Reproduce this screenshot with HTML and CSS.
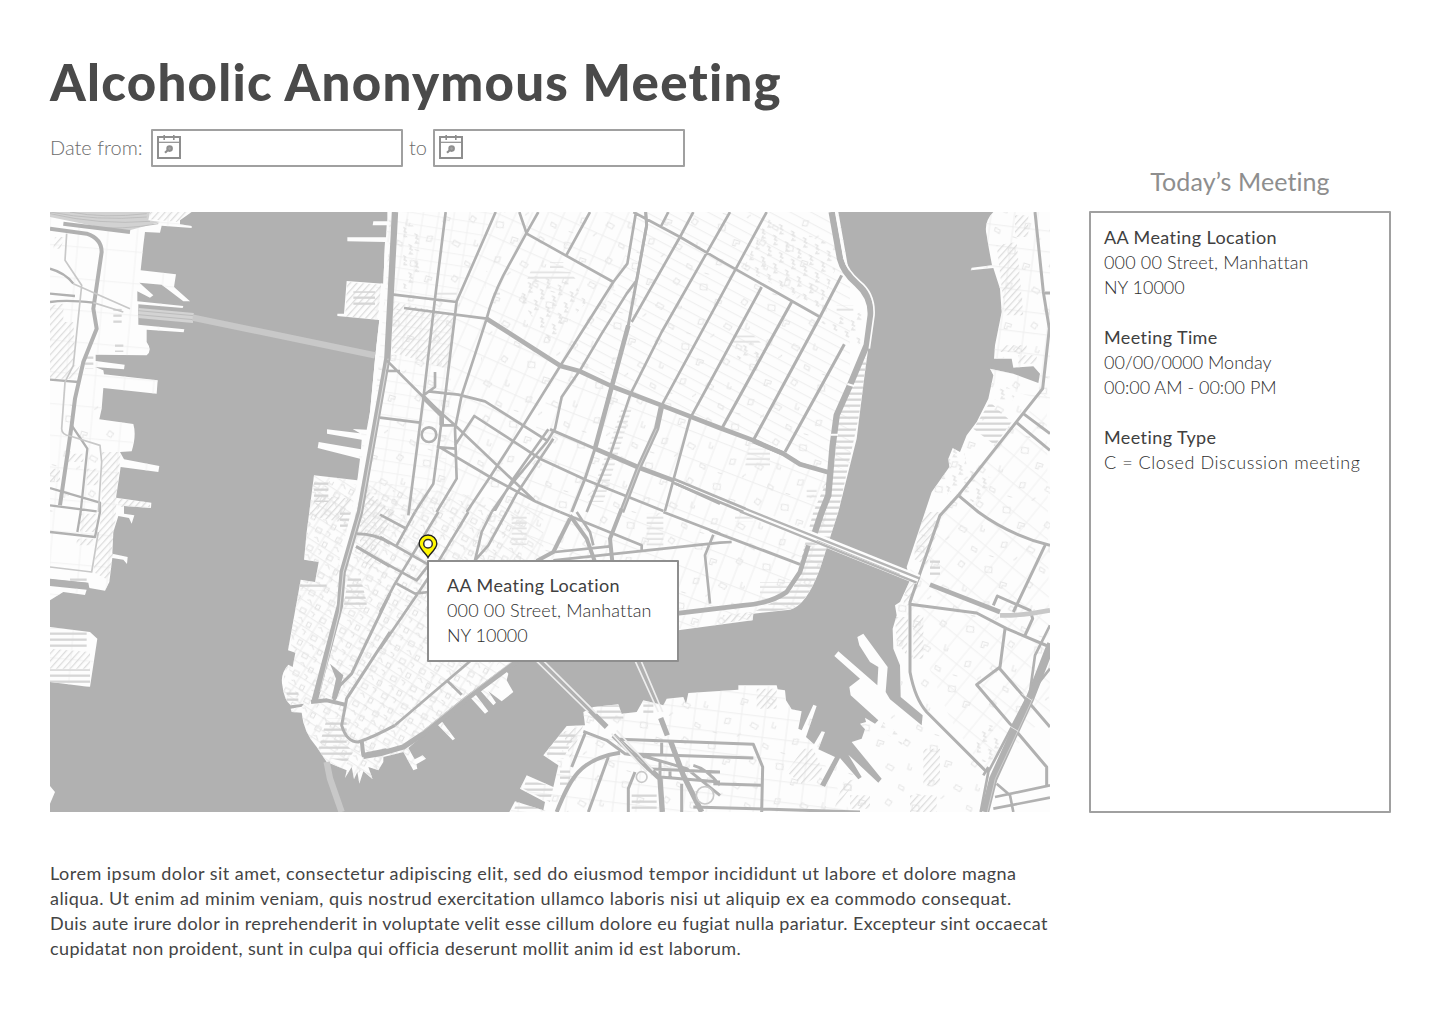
FILE: index.html
```html
<!DOCTYPE html>
<html lang="en">
<head>
<meta charset="utf-8">
<title>Alcoholic Anonymous Meeting</title>
<link rel="stylesheet" href="styles.css">
</head>
<body>
<svg class="defs" aria-hidden="true">
  <symbol id="calendar" viewBox="0 0 26 26">
    <rect x="2" y="3" width="22" height="21" fill="none" stroke="#8e8e8e" stroke-width="2"/>
    <path d="M2 8.3H24" stroke="#8e8e8e" stroke-width="1.2"/>
    <path d="M8.2 1V6M17.800 1V6" stroke="#8e8e8e" stroke-width="1.6"/>
    <circle cx="13.600" cy="14.600" r="2.300" fill="#a5a5a5" stroke="#8e8e8e" stroke-width="2"/>
    <path d="M12 16L9 18.800" stroke="#8e8e8e" stroke-width="2.200"/>
  </symbol>
</svg>
<div class="page">
  <header class="header">
    <h1 class="title">Alcoholic Anonymous Meeting</h1>
    <div class="filter">
      <span class="filter-label from">Date from:</span>
      <div class="date-input"><svg class="calendar"><use href="#calendar"/></svg></div>
      <span class="filter-label to">to</span>
      <div class="date-input"><svg class="calendar"><use href="#calendar"/></svg></div>
    </div>
  </header>
  <div class="content">
    <main class="main">
      <div class="map">
        <svg class="map-art" viewBox="0 0 3000 1800" aria-hidden="true">
          <defs>
            <pattern id="diag" width="15" height="15" patternUnits="userSpaceOnUse" patternTransform="rotate(42)"><path d="M2 0V15" stroke="#dadada" stroke-width="3.500"/></pattern>
            <pattern id="stripe" width="20" height="18" patternUnits="userSpaceOnUse"><path d="M0 5H20" stroke="#d6d6d6" stroke-width="7"/></pattern>
            <pattern id="stripe-light" width="20" height="16" patternUnits="userSpaceOnUse"><path d="M0 5H20" stroke="#e4e4e4" stroke-width="6"/></pattern>
            <pattern id="blocks-nj" width="88" height="95" patternUnits="userSpaceOnUse" patternTransform="rotate(5)"><path d="M0 2H88M3 0V95" stroke="#f2f2f2" stroke-width="3"/></pattern>
            <pattern id="blocks-west" width="46" height="34" patternUnits="userSpaceOnUse" patternTransform="rotate(9)"><path d="M0 2H46M3 0V34" stroke="#f1f1f1" stroke-width="3"/></pattern>
            <pattern id="blocks-soho" width="44" height="68" patternUnits="userSpaceOnUse" patternTransform="rotate(24)"><path d="M0 2H44M3 0V68" stroke="#eeeeee" stroke-width="3"/></pattern>
            <pattern id="blocks-east" width="96" height="29" patternUnits="userSpaceOnUse" patternTransform="rotate(28)"><path d="M0 2H96" stroke="#ededed" stroke-width="3"/></pattern>
            <pattern id="blocks-les" width="48" height="78" patternUnits="userSpaceOnUse" patternTransform="rotate(21)"><path d="M0 2H48M3 0V78" stroke="#eeeeee" stroke-width="3"/></pattern>
            <pattern id="blocks-fidi" width="42" height="33" patternUnits="userSpaceOnUse" patternTransform="rotate(33)"><path d="M0 2H42M3 0V33" stroke="#ebebeb" stroke-width="3"/></pattern>
            <pattern id="blocks-bk" width="52" height="66" patternUnits="userSpaceOnUse" patternTransform="rotate(39)"><path d="M0 2H52M3 0V66" stroke="#f0f0f0" stroke-width="3"/></pattern>
            <pattern id="blocks-navy" width="70" height="62" patternUnits="userSpaceOnUse" patternTransform="rotate(7)"><path d="M0 2H70M3 0V62" stroke="#eeeeee" stroke-width="3"/></pattern>
            <pattern id="buildings" width="213" height="187" patternUnits="userSpaceOnUse" patternTransform="rotate(17)"><path d="M12 10l20 -4l4 16l-20 4zM70 40h18v8h-10v10h-8zM150 14l14 5l-5 14l-14 -5zM40 112l14 -4v16l-14 3zM120 100l20 5l-4 12l-20 -5zM180 80v18h10v-9M14 162h14M88 154l8 -12M170 150l16 4v10l-16 -4z" fill="none" stroke="#e6e6e6" stroke-width="3"/></pattern>
            <pattern id="lots" width="67" height="59" patternUnits="userSpaceOnUse" patternTransform="rotate(27)"><path d="M5 6h16v14h-16zM36 4l13 3l-3 12M10 38l8 -4l10 10M42 36h12v14h-12z" fill="none" stroke="#e3e3e3" stroke-width="3"/></pattern>
            <pattern id="project" width="41" height="37" patternUnits="userSpaceOnUse" patternTransform="rotate(29)"><path d="M4 8h10v9h10M30 26l-10 5v-8" fill="none" stroke="#e4e4e4" stroke-width="4"/></pattern>
            <clipPath id="manhattan"><path id="manhattan-shore" d="M1012 0V28H970L968 40H1010L1008 76H892V88L1005 90L1000 215L890 207L882 305H862V312L988 324L975 440L960 600L950 653L908 651L930 664L831 652V665L935 683L933 712L806 690L803 708L930 740L922 805L792 790L770 960L762 1043L806 1050L795 1110L752 1103L714 1315L736 1322L728 1365L715 1358Q690 1385 697 1420Q702 1465 722 1480L762 1475L755 1484L722 1490L725 1500L755 1502Q760 1560 800 1605L830 1650L890 1675L885 1698L905 1665L912 1702L922 1680L928 1715L940 1678L968 1702L955 1665L985 1675L1000 1650L1000 1635L1060 1620L1090 1675L1102 1670L1099 1657L1128 1640L1118 1630L1094 1642L1075 1608L1160 1535L1208 1585L1215 1580L1174 1526L1260 1455L1305 1505L1315 1498L1275 1445L1290 1435L1330 1480L1338 1472L1315 1438L1355 1468L1390 1440L1370 1405L1375 1385L1362 1370L1400 1348L1885 1255L2108 1225L2110 1205L2220 1193Q2270 1180 2310 1070L2365 900L2420 680L2445 480L2470 300Q2475 260 2445 235Q2405 205 2395 170L2365 0Z"/></clipPath>
            <clipPath id="brooklyn"><path id="brooklyn-shore" d="M2830 0Q2800 30 2810 70L2817 112L2826 160L2765 167L2762 175L2830 168L2850 230L2855 300L2835 400L2832 440H2885L2890 467L2950 463L2970 485L2965 513L2890 485L2820 470L2830 490L2815 560L2780 630L2750 670L2730 720L2708 708L2695 740L2698 765L2645 840L2625 900L2570 1065L2580 1105L2550 1170L2535 1180L2540 1210L2528 1250L2530 1310L2550 1360L2552 1455L2618 1510L2615 1540L2520 1462L2507 1440L2513 1365L2440 1265L2422 1275L2428 1300L2460 1350L2485 1365L2482 1420L2365 1318L2353 1332L2430 1400L2398 1425L2402 1450L2485 1525L2475 1535L2445 1517L2448 1530L2430 1535L2445 1552L2435 1580L2405 1590L2495 1700L2485 1712L2395 1628L2435 1695L2425 1702L2370 1638L2325 1725L2310 1718L2355 1635L2305 1612L2325 1560L2315 1558L2292 1597L2268 1575L2300 1482L2290 1478L2255 1555L2245 1550L2255 1498L2225 1492L2208 1465L2205 1435L2183 1432L2180 1420L2065 1420V1433L1915 1443L1908 1475L1900 1455L1850 1460L1840 1480L1780 1465L1760 1500L1715 1505L1705 1477L1630 1485L1600 1500L1605 1540L1550 1542L1480 1630L1525 1660L1510 1725L1430 1690L1410 1730L1485 1770L1480 1795L1395 1768L1378 1800H3000V0Z"/></clipPath>
            <clipPath id="jersey"><path id="jersey-shore" d="M0 0H425L390 25V37L425 42V48L335 41L330 62L285 60L280 100L272 175L378 187L372 225L420 268H400L335 218L268 212L310 250L300 257L262 238V268L400 282L398 288L265 277V338L403 352L401 361L290 353V390Q308 415 290 430L137 428V447L224 458L222 472L135 465L160 475L162 487L323 505L320 545L160 528L155 590L148 622L250 636Q260 670 245 718L210 720L222 742L328 762L325 780L212 765L198 857L304 872L303 888L222 882V905L253 910L245 935L237 918L205 912L190 960L187 1025L233 1035L231 1056L220 1043L187 1038L178 1110L165 1136L118 1128L115 1112L0 1100ZM0 1122L110 1133L105 1149L40 1140L0 1165ZM0 1245L120 1260L142 1280L120 1425L0 1410ZM0 1722L15 1740L0 1775Z"/></clipPath>
          </defs>

          <rect width="3000" height="1800" fill="#b1b1b1"/>
          <g fill="#fdfdfd"><use href="#manhattan-shore"/><use href="#brooklyn-shore"/><use href="#jersey-shore"/></g>

          <!-- minor streets and building footprints -->
          <g clip-path="url(#jersey)">
            <rect width="450" height="1440" fill="url(#blocks-nj)"/>
            <path d="M40 560H240V720H40ZM0 640H150V900H0Z" fill="url(#buildings)"/>
            <path d="M0 280L40 275V330H70L75 420L60 500H0ZM15 75H45L30 110H10ZM60 460H90L75 500H50ZM300 0H425L380 30L300 22ZM155 720H212L200 860L185 1110L130 1080L155 900ZM50 725H100V750H50ZM110 770H145V820H110ZM0 770H30V810H0ZM205 862H300V885H205ZM90 905H140V960H90ZM80 980H130V1000H80ZM0 1310L120 1320V1370H0Z" fill="url(#diag)"/>
            <path d="M0 1250H110V1310H0ZM0 1372H120V1425H0ZM190 290H215V340H190ZM195 390H220V420H195ZM105 430H130V470H105ZM60 1090H110V1110H60Z" fill="url(#stripe)"/>
            <path d="M0 0H300L295 25L330 30L220 60L0 15Z" fill="#d2d2d2"/>
            <path d="M0 5Q150 40 300 28M0 0Q140 28 290 15M60 0Q160 20 290 5M100 45Q220 55 325 35" fill="none" stroke="#bebebe" stroke-width="3"/>
          </g>
          <g clip-path="url(#manhattan)">
            <path d="M1000 0H1330L1215 300L1180 900L900 1000Z" fill="url(#blocks-west)"/>
            <path d="M1330 0H1760L1700 230L1540 460L1270 900H1150L1215 300Z" fill="url(#blocks-soho)"/>
            <path d="M1760 0H2400V780L1530 460L1700 230Z" fill="url(#blocks-east)"/>
            <path d="M1530 460L2340 780L2300 1250H1500L1380 850Z" fill="url(#blocks-les)"/>
            <path d="M760 780L1480 880L1480 1300L1000 1760H690Z" fill="url(#blocks-fidi)"/>
            <path d="M1020 0H1340L1230 320L1190 900L940 900ZM1320 0H2330V760L1290 500Z" fill="url(#buildings)"/>
            <path d="M1290 500L2340 760L2300 1250H1250Z" fill="url(#buildings)"/>
            <path d="M770 800L940 820L1440 900L1350 1350L1000 1740L690 1500Z" fill="url(#lots)"/>
            <path d="M1440 190L1570 210L1610 270L1500 390L1400 250ZM2150 20L2380 110L2310 290L2080 170ZM2060 390H2130V450L2050 440ZM2310 330L2440 300L2430 400ZM1060 40H1110V230H1060Z" fill="url(#project)"/>
            <path d="M1030 270L1220 310L1190 470L1025 420ZM892 210L995 218L988 322H885ZM800 850L905 860L870 930L775 910ZM930 820L1030 900L960 1080L930 1010ZM2020 1210L2105 1200V1220L2010 1235Z" fill="url(#diag)"/>
            <path d="M910 238H975V285H910ZM792 805H835V870H792ZM870 900H905V950H870ZM895 1090H930L950 1170V1190H880ZM750 1110H830V1135H750ZM830 1520H890V1600L910 1620L890 1650L800 1630ZM710 1440H745V1475H710ZM2440 440H2455L2425 620L2365 900L2310 1070Q2270 1180 2220 1190L2090 1210L2170 1170L2230 1130L2290 900L2355 750L2360 620L2405 510Z" fill="url(#stripe)"/>
            <path d="M1445 170L1560 180L1580 205H1430ZM1500 150H1540V170H1500ZM1715 590H1745L1660 870H1615L1670 720ZM1385 910H1430V1000H1385ZM1790 905H1840V1015H1790ZM2050 370H2110L2140 400H2050ZM2095 710H2160V765H2085ZM2360 280H2410V300H2360ZM2130 1110H2220V1150H2130ZM2055 905H2110V930H2055ZM2270 830H2300V865H2270ZM1160 240H1220V250H1160ZM1330 240H1350V250H1330Z" fill="url(#stripe-light)"/>
            <path d="M1010 90L1000 220L962 640L915 880L872 1060" fill="none" stroke="#fdfdfd" stroke-width="14"/>
          </g>
          <g clip-path="url(#brooklyn)">
            <path d="M2790 0H3000V560L2960 560L2780 500Z" fill="url(#blocks-navy)"/>
            <path d="M2990 540L2600 980L2560 1180L2700 1520L2810 1690L3000 1500Z" fill="url(#blocks-bk)"/>
            <path d="M1500 1420H2200L2400 1800H1380Z" fill="url(#blocks-navy)"/>
            <path d="M2800 0H3000V1500L2540 1500V1130Z" fill="url(#buildings)"/>
            <path d="M1600 1480L2240 1440L2450 1800H1450Z" fill="url(#buildings)"/>
            <path d="M2400 1480L2640 1500L2820 1690V1800H2350Z" fill="url(#buildings)"/>
            <path d="M2840 100L2900 90L2920 310H2865ZM2860 400H2930V420H2850ZM2895 10H2935V75H2895ZM2905 430H2960V455H2905ZM2620 900H2680L2630 1060L2590 1040ZM2570 1110H2610L2580 1180H2560ZM2535 1215H2575L2570 1330L2540 1290ZM2590 1210H2620V1340H2590ZM2120 1430H2180V1490H2120ZM2260 1610L2290 1610L2320 1680L2260 1720L2210 1680ZM2400 1750H2460V1790H2400ZM2620 1610H2670V1720H2620ZM2580 1750H2660V1800H2580ZM2380 1710L2420 1700L2350 1800ZM1540 1560L1600 1540L1560 1640Z" fill="url(#diag)"/>
            <path d="M2650 740L2740 700L2750 760L2690 850ZM2840 510L2900 540L2880 580L2830 560ZM2740 760L2830 800L2790 880L2700 840ZM2780 1540H2850V1650H2780ZM2500 1530L2580 1590L2570 1610L2490 1550Z" fill="url(#project)"/>
            <path d="M2820 570L2885 630L2835 700L2770 650ZM2640 1040H2670V1090H2640ZM1510 1560H1580L1540 1640L1490 1630ZM1430 1700L1510 1725L1500 1770L1420 1730ZM1400 1770H1480V1800H1390ZM1640 1480H1720V1520H1640ZM1745 1740H1820V1800H1745ZM1780 1470H1810V1510H1780ZM1530 1670H1560V1720H1530Z" fill="url(#stripe)"/>
          </g>

          <path d="M0 1102L110 1112L118 1128L0 1120ZM840 1355L880 1390L860 1460H845L858 1400Z" fill="#b1b1b1"/>

          <!-- tunnels -->
          <path d="M265 303L430 318" stroke="#d3d3d3" stroke-width="30"/>
          <path d="M265 296L430 311M265 308L430 323" stroke="#bdbdbd" stroke-width="3"/>
          <path d="M428 317L975 430M830 1650L840 1700L875 1800" fill="none" stroke="#c8c8c8" stroke-width="19"/>

          <g class="roads">
            <!-- Jersey City -->
            <path class="w12" d="M0 50L110 65Q155 80 155 120L130 290L140 350L100 450L75 560L65 640L30 880"/>
            <path class="w12" d="M40 35L240 60"/>
            <path class="w7" d="M65 640L112 710L92 900L82 960M0 170Q45 182 70 215M0 245L75 252M0 270Q50 262 130 272M0 503L85 510M0 828L150 872V900L135 975L0 960M0 880L140 898"/>
            <path class="w5 light" d="M50 65L45 145L95 220L70 460L45 510L35 650Q35 668 60 672L150 700L155 750L145 900M70 215L240 290M130 272L220 300M0 1065L125 1080L145 960"/>
            <!-- West Street -->
            <path class="w20" d="M1035 0L1012 440L930 900L878 1080L870 1180L793 1470"/>
            <path class="lane" d="M1014 440L932 900L880 1080L868 1200L810 1440"/>
            <path class="w12" d="M783 1470L830 1465L885 1478M940 1630L935 1585M935 1630L1010 1615"/>
            <path class="w9" d="M920 965Q980 965 1020 995M918 1003L1020 1063M1020 1145L945 1300L905 1385L870 1420L850 1470M1020 1260L890 1460L875 1540Q890 1590 925 1590Q970 1575 1035 1540"/>
            <!-- SoHo, Village, East Side -->
            <g transform="translate(990)">
              <path class="w8" d="M197 0L165 260L130 560L85 910M347 0L230 268L197 540L182 650L160 815L105 900M475 0L440 62L370 190Q335 260 320 320L245 550L225 650L230 800L170 900M418 0L440 65L700 210M630 0L560 128M768 0L742 155L700 210L542 460L430 640L330 795L260 900M797 0L800 40L770 205L740 245L665 365L600 475L545 555L525 650L500 690L385 828L335 900M940 0L900 75L755 330M1050 0L845 360L752 545L690 730L620 900M1160 0L845 580M1145 225L990 510L930 620L855 897M760 0L900 75L1020 145L1320 315M865 0L842 45M35 247L230 270M72 288L320 320M18 477H60M20 445L130 555L225 640L465 868M145 538L235 548L315 568L500 685M225 700L283 612L480 740L620 805L850 897M180 706L330 795L465 868L540 900M0 617L120 632M505 652L400 800L345 895M520 680L410 845L380 900M888 815L1020 875M165 480V525L130 550M180 640H225M170 705L225 710"/>
              <circle class="w8" cx="147" cy="668" r="22"/>
              <path class="w9" d="M797 0L800 40L770 205L745 340L695 520L645 710L615 800L575 900M320 320L542 462M510 652L645 710"/>
              <path class="w13" d="M320 320L542 462L600 478L700 525L845 580L1020 648L1120 685L1210 725M130 555L185 610V640M745 340L645 710L780 768L880 805"/>
              <path class="w8" d="M880 800L1120 900M880 812L1090 900"/>
              <path class="w17" d="M845 580L830 650L775 770L725 900"/>
              <path class="lane thin" d="M830 650L775 770L725 900"/>
            </g>
            <!-- Alphabet City and FDR Drive -->
            <g transform="translate(1980)">
              <path class="w9" d="M395 190L330 315L130 685M245 270L35 650M403 397L225 720M125 685L220 725L270 755L350 780"/>
              <path class="w13" d="M130 687L220 725L270 757L360 782"/>
              <path class="w20" d="M365 0L390 140Q400 180 440 215Q485 255 482 310L470 400L420 520L380 610L368 700L355 850L335 900L310 975"/>
              <path class="shore-lane" d="M378 0L403 140Q412 175 450 208Q496 245 492 310L478 410"/>
              <path class="gap" d="M412 516L432 522M362 668L384 668"/>
              <path class="w13" d="M295 1000L270 1080L230 1140Q180 1175 100 1180L-105 1205"/>
              <path class="w9" d="M975 0L1000 240L1018 350L998 530L745 850Q700 900 690 910L600 1170V1380Q615 1460 650 1500L830 1680"/>
              <path class="w9" d="M745 850L805 900Q900 970 1020 1000M940 605L1020 665M920 632L1020 715M1005 243H1020M0 955L270 1057M600 1177L800 1203L890 1250L1020 1305M885 1250L870 1365L800 1418L1010 1665V1720M865 1365L1020 1545M1005 1000L910 1200M850 1180L862 1152L960 1195L968 1220L945 1270"/>
            </g>
            <!-- Lower Manhattan -->
            <g transform="translate(990 900)">
              <path class="w8" d="M105 0L50 100M175 0L45 215L0 300M265 0L150 190L110 250L0 410M0 75L145 158M0 145L110 205L145 160M50 215L105 245L145 240M335 0L305 60L285 145M380 0L325 100L285 145M540 0L785 100V120M590 0L630 60L640 100M520 145L1020 92L1055 90M525 120L690 103M850 0L1020 65M1000 68L975 130L990 275M270 448L45 640M200 505L245 548M0 8L75 48"/>
              <path class="w12" d="M570 20L520 120L470 147M570 10L620 80L645 150M725 -10L690 80L697 150"/>
              <path class="w16" d="M410 448L260 560L130 665L70 705L0 725L-50 733"/>
              <path class="lane thin" d="M400 446L250 560L125 660"/>
            </g>
            <!-- Downtown Brooklyn -->
            <g transform="translate(990 900)">
              <path class="w16" d="M625 590L680 645M700 670L840 800L847 900"/>
              <path class="lane thin" d="M705 668L790 755"/>
              <path class="w16" d="M842 618L862 670M872 688L910 790L965 900"/>
              <path class="w9" d="M610 658L680 685L735 725L800 735L920 770L1020 850M735 725L1120 738M615 665L575 765M685 735L625 900M765 780L745 830V900M845 685V725M840 750V795L1020 810M905 815V900M800 770L1020 780M720 682L1120 697L1148 765L1145 900M1000 815L1145 820M940 760Q980 770 1020 820M870 775V800M940 885L1440 900"/>
              <path class="w12" d="M530 900C570 800 600 740 720 722"/>
              <circle class="w5 light" cx="785" cy="795" r="16"/><circle class="w5 light" cx="975" cy="850" r="26"/>
            </g>
            <!-- Williamsburg and Navy Yard -->
            <g transform="translate(1980 900)">
              <path class="w14" d="M660 218L870 300"/>
              <path class="w14 light" d="M870 310Q930 312 1020 295"/>
              <path class="w24" d="M1024 395L960 560L900 690L850 800L825 900"/>
              <path class="w8" d="M1020 340L975 430L960 540L835 780L812 900M1020 470L980 520M855 855L1020 820M850 890L1020 857M860 815L900 850L910 900M835 765L820 790"/>
              <path class="lane thin" d="M968 560L908 690L856 800L832 900"/>
              <path class="gap thin" d="M935 545L965 565M895 640L925 658"/>
            </g>
          </g>

          <!-- bridges -->
          <path d="M2085 893L2605 1103" stroke="#fdfdfd" stroke-width="30"/>
          <path d="M2070 898L2600 1112M2085 890L2610 1100" stroke="#b5b5b5" stroke-width="7"/>
          <path d="M2300 985L2550 1087" stroke="#c6c6c6" stroke-width="3"/>
          <path d="M1458 1346L1615 1500M1480 1346L1640 1505M1755 1346L1825 1500M1773 1346L1838 1500M1685 1565L1790 1680M1700 1555L1810 1675" stroke="#eeeeee" stroke-width="5"/>
        </svg>
        <svg class="pin" viewBox="0 0 20 25" aria-label="Meeting location">
          <path d="M10 23.500C8.500 20 1.200 15 1.200 9.800A8.800 8.800 0 0 1 18.800 9.800C18.800 15 11.500 20 10 23.500Z" fill="#fff700" stroke="#222" stroke-width="1.400"/>
          <circle cx="10" cy="9.700" r="4.300" fill="#fff" stroke="#333" stroke-width="1.500"/>
        </svg>
        <div class="popup">
          <p class="strong s1">AA Meating Location</p>
          <p class="s2">000 00 Street, Manhattan</p>
          <p>NY 10000</p>
        </div>
      </div>
      <div class="description">
        <p class="d1">Lorem ipsum dolor sit amet, consectetur adipiscing elit, sed do eiusmod tempor incididunt ut labore et dolore magna</p>
        <p class="d2">aliqua. Ut enim ad minim veniam, quis nostrud exercitation ullamco laboris nisi ut aliquip ex ea commodo consequat.</p>
        <p class="d3">Duis aute irure dolor in reprehenderit in voluptate velit esse cillum dolore eu fugiat nulla pariatur. Excepteur sint occaecat</p>
        <p class="d4">cupidatat non proident, sunt in culpa qui officia deserunt mollit anim id est laborum.</p>
      </div>
    </main>
    <aside class="sidebar">
      <h2 class="sidebar-title">Today’s Meeting</h2>
      <div class="panel">
        <section>
          <p class="strong s1">AA Meating Location</p>
          <p class="s2">000 00 Street, Manhattan</p>
          <p>NY 10000</p>
        </section>
        <section>
          <p class="strong s1">Meeting Time</p>
          <p>00/00/0000 Monday</p>
          <p>00:00 AM - 00:00 PM</p>
        </section>
        <section>
          <p class="strong s1">Meeting Type</p>
          <p class="s3">C = Closed Discussion meeting</p>
        </section>
      </div>
    </aside>
  </div>
</div>
</body>
</html>
```
FILE: styles.css
```css
* { box-sizing: border-box; }
body { margin: 0; background: #fff; color: #2e2e2e; font-family: Lato, sans-serif; font-size: 18px; line-height: 25px; font-weight: 300; }
h1, h2, p { margin: 0; white-space: nowrap; }
.defs { display: block; width: 0; height: 0; }
.page { width: 1440px; height: 1024px; padding: 50px 49px 0 50px; }

.title { height: 79px; font-size: 51px; line-height: 64px; font-weight: 900; letter-spacing: 1.25px; color: #4a4a4a; }
.filter { display: flex; height: 38px; align-items: center; }
.filter-label { height: 38px; font-size: 20px; color: #6c6c6c; line-height: 36px; }
.from { width: 101px; }
.to { width: 30px; padding-left: 6px; }
.date-input { width: 252px; height: 38px; border: 2px solid #a0a0a0; border-radius: 1px; padding: 3px; }
.calendar { display: block; width: 26px; height: 26px; }

.content { display: flex; gap: 39px; }
.main { width: 1000px; padding-top: 45px; }
.map { position: relative; height: 600px; overflow: hidden; }
.map-art { display: block; width: 1000px; height: 600px; }
.pin { position: absolute; left: 368px; top: 322px; width: 20px; height: 25px; }
.popup { position: absolute; left: 377px; top: 348px; width: 252px; height: 102px; padding: 11px 18px; background: #fff; border: 2px solid #8e8e8e; border-radius: 1px; }

.description { padding-top: 49px; font-weight: 400; color: #444; }
.d1 { letter-spacing: .48px; }
.d2 { letter-spacing: .445px; }
.d3 { letter-spacing: .37px; }
.d4 { letter-spacing: .385px; }

.sidebar { width: 302px; }
.sidebar-title { height: 44px; line-height: 28px; font-size: 25px; font-weight: 400; letter-spacing: .1px; color: #8e8e8e; text-align: center; }
.panel { display: flex; flex-direction: column; gap: 25px; height: 602px; padding: 12px 13px; border: 2px solid #a0a0a0; border-radius: 1px; }
.strong { font-weight: 400; color: #404040; }
.s1 { letter-spacing: .41px; }
.s2 { letter-spacing: .15px; }
.s3 { letter-spacing: .55px; }

.roads path, .roads circle { fill: none; stroke: #b1b1b1; stroke-linejoin: round; }
.roads .light { stroke: #c8c8c8; }
.roads .w5 { stroke-width: 5; }
.roads .w7 { stroke-width: 7; }
.roads .w8 { stroke-width: 8; }
.roads .w9 { stroke-width: 9; }
.roads .w12 { stroke-width: 12; }
.roads .w13 { stroke-width: 14; }
.roads .w14 { stroke-width: 14; }
.roads .w16 { stroke-width: 16; }
.roads .w17 { stroke-width: 16; }
.roads .w20 { stroke-width: 19; }
.roads .w24 { stroke-width: 25; }
.roads .lane { stroke: #dcdcdc; stroke-width: 3; }
.roads .shore-lane { stroke: #fdfdfd; stroke-width: 5; }
.roads .gap { stroke: #fdfdfd; stroke-width: 6; }
.roads .thin { stroke-width: 2; }
```
